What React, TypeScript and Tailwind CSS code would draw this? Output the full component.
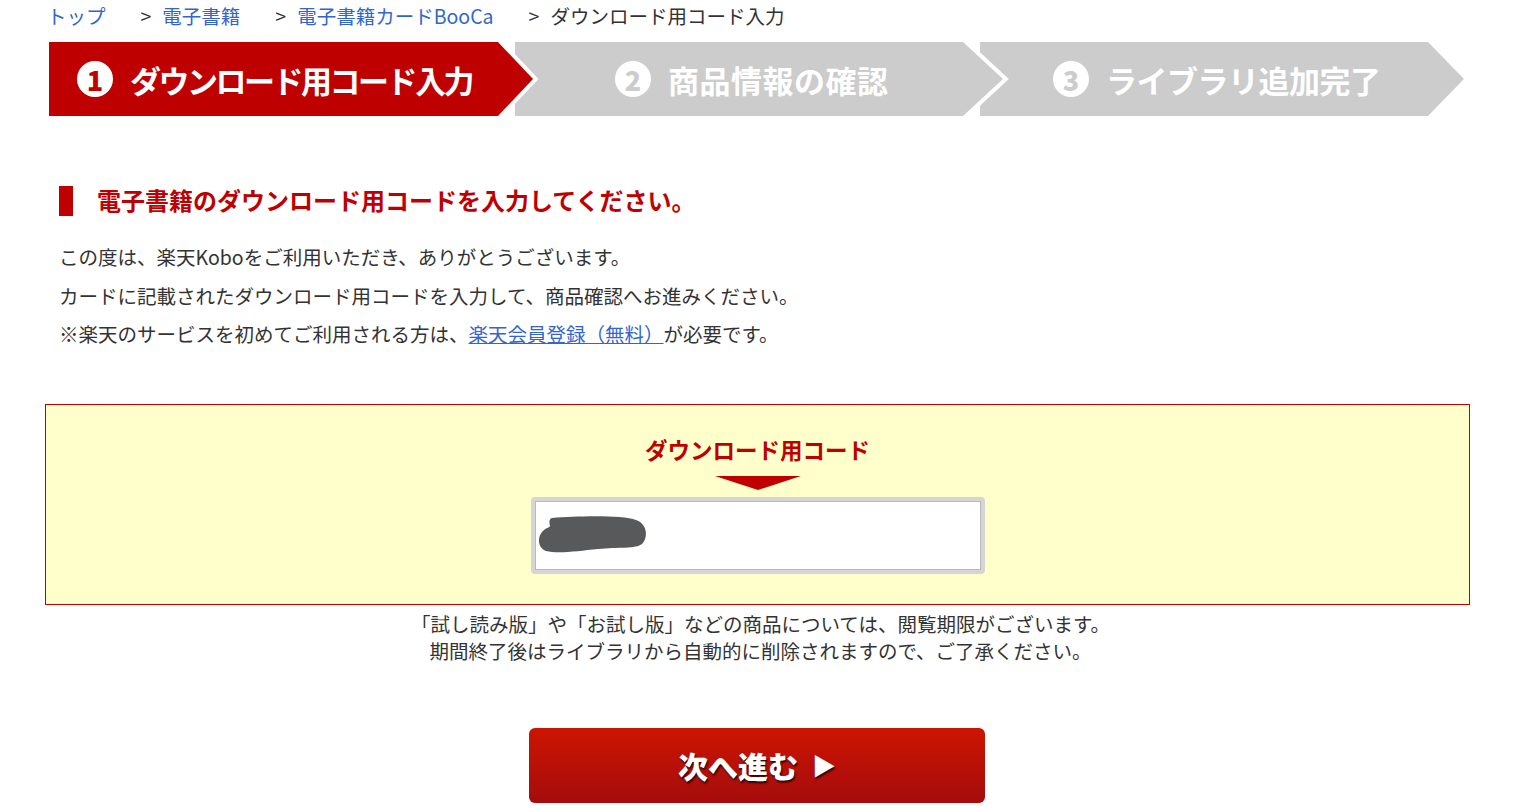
import React from 'react';

const font = { fontFamily: '"Noto Sans CJK JP", "Noto Sans", sans-serif' };

// 手順バーの各ステップ
const steps = [
  { no: '1', label: 'ダウンロード用コード入力', active: true, cls: 'pl-[28px]', track: 'tracking-[-2.5px]' },
  { no: '2', label: '商品情報の確認', active: false, cls: 'pl-[100px]', track: 'tracking-[0.5px]' },
  { no: '3', label: 'ライブラリ追加完了', active: false, cls: 'pl-[73px]', track: 'tracking-[-0.5px]' },
];

const StepBar: React.FC = () => (
  <div className="relative ml-[49px] mt-[10px] h-[74px] w-[1416px]">
    <svg className="absolute inset-0" width="1416" height="74" viewBox="0 0 1416 74">
      <polygon points="931,0 1379,0 1415,37 1379,74 931,74" fill="#cccccc" />
      <polyline points="914,0 954,37 914,74" fill="none" stroke="#ffffff" strokeWidth="8" />
      <polygon points="466,0 914,0 954,37 914,74 466,74" fill="#cccccc" />
      <polyline points="449,0 484,37 449,74" fill="none" stroke="#ffffff" strokeWidth="8" />
      <polygon points="0,0 449,0 484,37 449,74 0,74" fill="#bf0000" />
    </svg>
    <div className="relative grid h-full grid-cols-[466px_465px_485px]">
      {steps.map((s) => (
        <div key={s.no} className={`flex items-center ${s.cls}`}>
          <span
            className={`flex h-[36px] w-[36px] items-center justify-center rounded-full bg-white text-[27px] font-black leading-none ${
              s.active ? 'text-[#bf0000]' : 'text-[#cccccc]'
            }`}
          >
            {s.no}
          </span>
          <span className={`ml-[17px] text-[31px] font-bold leading-none text-white ${s.track}`}>{s.label}</span>
        </div>
      ))}
    </div>
  </div>
);

const Crumb: React.FC<{ children: React.ReactNode }> = ({ children }) => (
  <span className="ml-[35px] flex items-center">
    <span>&gt;</span>
    <span className="ml-[11px]">{children}</span>
  </span>
);

export default function App() {
  return (
    <div className="min-h-screen bg-white text-[#333333]" style={font}>
      {/* パンくず */}
      <div className="flex h-[32px] items-center pl-[47px] text-[19.5px] leading-none">
        <a className="text-[#3366cc]" href="#">トップ</a>
        <Crumb><a className="text-[#3366cc]" href="#">電子書籍</a></Crumb>
        <Crumb><a className="text-[#3366cc]" href="#">電子書籍カードBooCa</a></Crumb>
        <Crumb>ダウンロード用コード入力</Crumb>
      </div>

      <StepBar />

      {/* 見出し */}
      <div className="ml-[59px] mt-[70px] flex items-center">
        <span className="h-[30px] w-[14px] bg-[#bf0000]"></span>
        <h1 className="ml-[24px] mb-[3px] text-[24px] font-bold leading-none text-[#bf0000]">
          電子書籍のダウンロード用コードを入力してください。
        </h1>
      </div>

      <div className="ml-[59px] mt-[22px] text-[19.5px] leading-[38.5px]">
        <p>この度は、楽天Koboをご利用いただき、ありがとうございます。</p>
        <p>カードに記載されたダウンロード用コードを入力して、商品確認へお進みください。</p>
        <p>
          ※楽天のサービスを初めてご利用される方は、
          <a className="text-[#3366cc] underline" href="#">楽天会員登録（無料）</a>
          が必要です。
        </p>
      </div>

      {/* コード入力欄 */}
      <div className="ml-[45px] mt-[50px] flex w-[1425px] flex-col items-center border border-[#c00000] bg-[#ffffcc] pb-[30px] pt-[29px]">
        <div className="text-[22.5px] font-bold leading-[30px] text-[#bf0000]">ダウンロード用コード</div>
        <div className="mt-[12px] h-0 w-0 border-l-[43px] border-r-[43px] border-t-[14px] border-l-transparent border-r-transparent border-t-[#bf0000]"></div>
        <div className="mt-[7px] h-[77px] w-[454px] rounded-[4px] bg-[#d5d5d5] p-[4px]">
          <div className="flex h-full items-center border border-[#b9b9b9] bg-white pl-[2px]">
            <svg width="110" height="38" viewBox="0 0 110 38">
              <path
                d="M14,2 C40,0 85,-1 98,4 C110,8 110,22 104,28 C98,33 80,31 60,33 C40,35 20,38 8,35 C0,32 -1,22 4,16 C7,12 11,12 12,10 C11,6 11,3 14,2 Z"
                fill="#58595b"
              />
            </svg>
          </div>
        </div>
      </div>

      <div className="mt-[5px] text-center text-[19.5px] leading-[27px]">
        <p>「試し読み版」や「お試し版」などの商品については、閲覧期限がございます。</p>
        <p>期間終了後はライブラリから自動的に削除されますので、ご了承ください。</p>
      </div>

      {/* 次へボタン */}
      <div className="mt-[64px] flex justify-center pr-[7px]">
        <button className="flex h-[75px] w-[456px] items-center justify-center rounded-[6px] bg-gradient-to-b from-[#cc1500] to-[#a50c0c] text-[30px] font-black text-white [text-shadow:1px_2px_2px_rgba(0,0,0,0.75)]">
          次へ進む
          <span className="ml-[14px] text-[24px]">▶</span>
        </button>
      </div>
    </div>
  );
}
